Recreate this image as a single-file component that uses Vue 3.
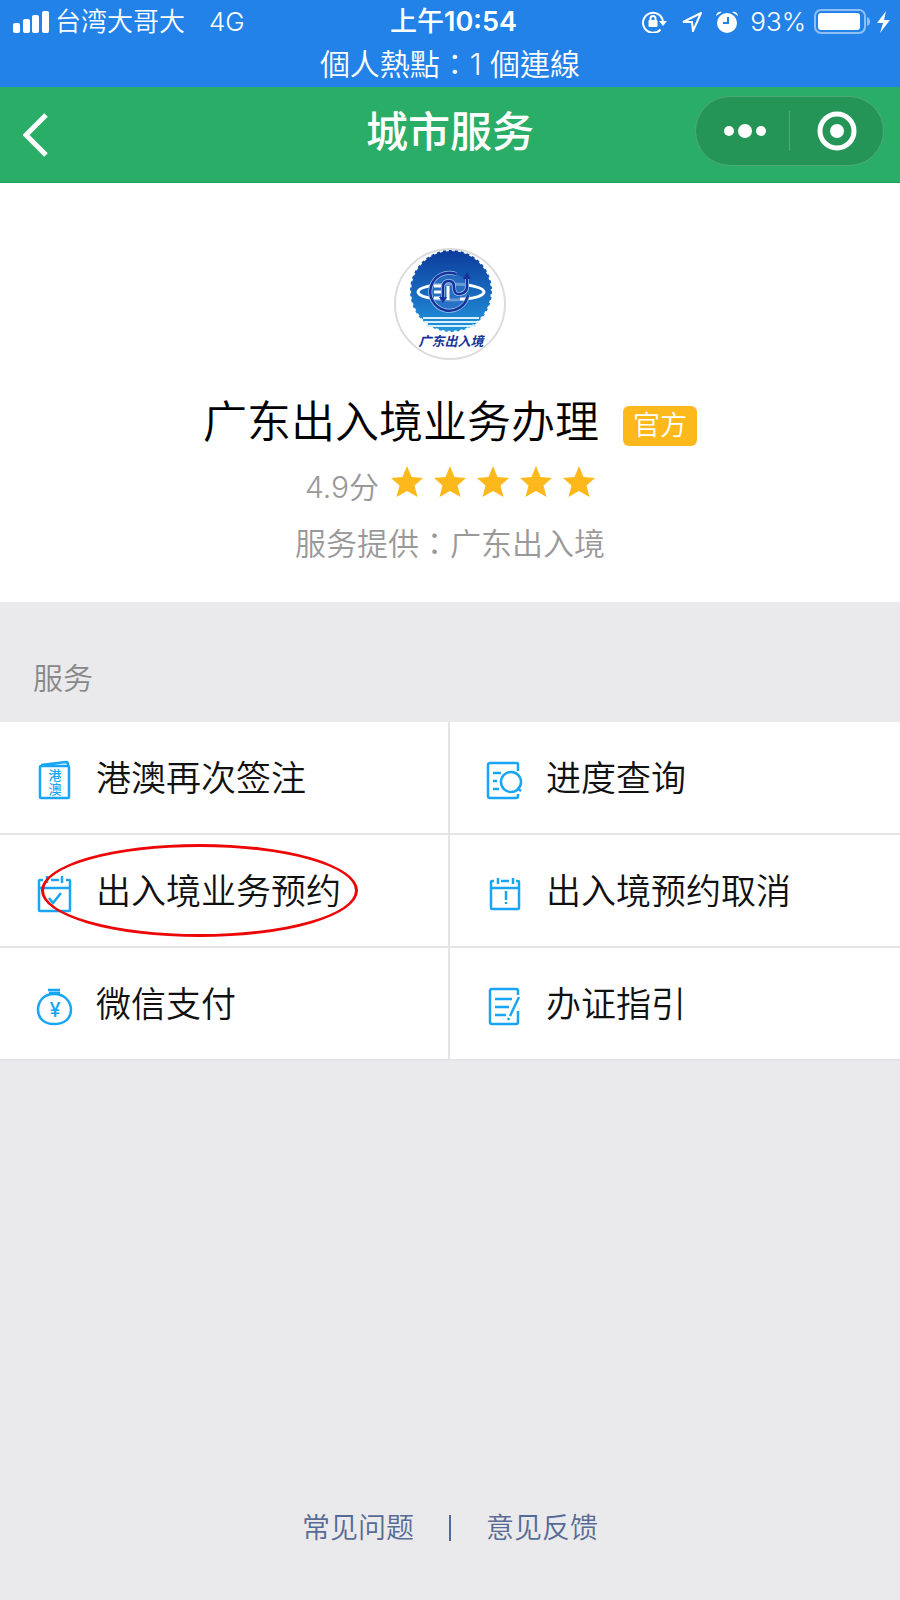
<script setup>
import { ref } from 'vue';

const stars = ref(5);

const services = ref([
  {
    name: '港澳再次签注',
    path: 'M6 12 q0 -1 1 -1 H34 q1 0 1 1 V42 q0 1 -1 1 H7 q-1 0 -1 -1 Z M7 10 L32 7 q2 0 2 3',
    labels: [
      { text: '港', x: 21, y: 25, size: 13 },
      { text: '澳', x: 21, y: 39, size: 13 }
    ]
  },
  {
    name: '进度查询',
    path: 'M34 16 V9 q0 -1 -1 -1 H6 q-2 0 -2 2 V41 q0 2 2 2 H32 q2 0 2 -2 V39 M9 18 H17 M9 26 H13 M9 34 H15 M17 27 a10 10 0 1 0 20 0 a10 10 0 1 0 -20 0 M33 33 L37 36'
  },
  {
    name: '出入境业务预约',
    marked: true,
    path: 'M9 12 H6 q-1 0 -1 1 V42 q0 1 1 1 H35 q1 0 1 -1 V13 q0 -1 -1 -1 H32 M17 12 H25 M5 20 H36 M13 8 V15 M28 8 V15 M15 30 L19 35 L27 25'
  },
  {
    name: '出入境预约取消',
    path: 'M10 13 H8 q-1 0 -1 1 V40 q0 1 1 1 H34 q1 0 1 -1 V14 q0 -1 -1 -1 H32 M17 13 H25 M7 20 H35 M14 10 V16 M29 10 V16 M22 23 V32 M22 34 V36'
  },
  {
    name: '微信支付',
    path: 'M14 9 H26 M15 12 H26 M20 13 C9 13 4 21 4 29 C4 38 11 43 20 43 C30 43 37 38 37 29 C37 21 31 13 20 13 Z',
    labels: [{ text: '¥', x: 21, y: 36, size: 20 }]
  },
  {
    name: '办证指引',
    path: 'M34 14 V10 q0 -2 -2 -2 H8 q-2 0 -2 2 V41 q0 2 2 2 H32 q2 0 2 -2 V30 M11 18 H28 M11 26 H25 M11 34 H22 M35 16 L26 35 M25 37 L24 39'
  }
]);
</script>

<template>
  <div class="page">
    <header class="status">
      <div class="status-row">
        <div class="status-left">
          <svg class="signal" viewBox="0 0 36 22" aria-hidden="true">
            <rect x="0" y="12" width="7" height="10" rx="2" />
            <rect x="10" y="8" width="7" height="14" rx="2" />
            <rect x="19" y="4" width="7" height="18" rx="2" />
            <rect x="29" y="0" width="7" height="22" rx="2" />
          </svg>
          <span>台湾大哥大</span>
          <span class="network">4G</span>
        </div>
        <div class="time">上午<strong>10:54</strong></div>
        <div class="status-right">
          <svg class="lock" viewBox="0 0 25 22" aria-hidden="true">
            <path class="line" d="M18.5 18.5 A10 10 0 1 1 21 11" />
            <path d="M17 10 H25 L21 15 Z" />
            <rect x="6.500" y="9" width="9" height="7" rx="1" />
            <path class="line" d="M8.500 10 V7.500 a2.500 2.500 0 0 1 5 0 V10" />
          </svg>
          <svg class="arrow" viewBox="0 0 20 20" aria-hidden="true">
            <path class="line" d="M1 10 L19 1 L11 19 L10 10 Z" />
          </svg>
          <svg class="alarm" viewBox="0 0 22 22" aria-hidden="true">
            <circle cx="11" cy="12" r="10" />
            <path d="M0 5 Q1 0 6 1 Z M22 5 Q21 0 16 1 Z" />
            <path class="hand" d="M12 6 V12 H7" />
          </svg>
          <span>93%</span>
          <svg class="battery" viewBox="0 0 56 26" aria-hidden="true">
            <rect class="shell" x="1" y="1" width="50" height="23" rx="6" />
            <rect x="4" y="4" width="42" height="17" rx="3" />
            <path class="nub" d="M53 8 q3 1 3 4.500 t-3 4.500 Z" />
          </svg>
          <svg class="bolt" viewBox="0 0 13 22" aria-hidden="true">
            <path d="M9 0 L0 12 H6 L3 22 L13 9 H7 Z" />
          </svg>
        </div>
      </div>
      <div class="hotspot">個人熱點：1 個連線</div>
    </header>

    <nav class="nav">
      <button class="back" type="button" aria-label="返回">
        <svg viewBox="0 0 26 44" aria-hidden="true">
          <path d="M23 2 L3 22 L23 42" />
        </svg>
      </button>
      <h1>城市服务</h1>
      <div class="capsule">
        <button type="button" aria-label="更多">
          <svg viewBox="0 0 42 40" aria-hidden="true">
            <circle cx="7" cy="20" r="5" />
            <circle cx="23" cy="20" r="7" />
            <circle cx="39" cy="20" r="5" />
          </svg>
        </button>
        <button type="button" aria-label="关闭">
          <svg viewBox="0 0 42 40" aria-hidden="true">
            <circle class="ring" cx="21" cy="20" r="17" />
            <circle cx="21" cy="20" r="7" />
          </svg>
        </button>
      </div>
    </nav>

    <section class="profile">
      <svg class="logo" viewBox="0 0 112 112" role="img" aria-label="广东出入境">
        <defs>
          <linearGradient id="sky" x1="0" y1="0" x2="0" y2="1">
            <stop offset="0" stop-color="#0c3c9c" />
            <stop offset="0.5" stop-color="#1867bd" />
            <stop offset="1" stop-color="#2196dc" />
          </linearGradient>
        </defs>
        <circle cx="56" cy="56" r="55" fill="#fff" stroke="#dcdcdc" stroke-width="2" />
        <circle cx="57" cy="43" r="40" fill="url(#sky)" />
        <circle cx="57" cy="43" r="40" fill="none" stroke="url(#sky)" stroke-width="2" stroke-dasharray="3 3" />
        <path d="M29 70 H85 M30 74 H84 M32 78 H82" stroke="#d8f0fc" stroke-width="2" />
        <ellipse cx="57" cy="44" rx="33" ry="8" fill="none" stroke="#fff" stroke-width="3" />
        <circle cx="56" cy="44" r="19" fill="#2c70c4" opacity="0.700" />
        <path d="M40 38 H48 M40 44 H47 M40 50 H46 M54 38 V52 M66 51 H72" fill="none" stroke="#fff" stroke-width="3" />
        <g fill="none" stroke="#9cc4ef" stroke-width="4">
          <path d="M62 26 A19 19 0 1 0 74 47" />
          <path d="M49 52 V39 Q49 33 55 33 Q60 33 60 39 Q60 47 66 46 Q72 45 73 40 V29" />
        </g>
        <g fill="none" stroke="#17339a" stroke-width="2.500">
          <path d="M62 26 A19 19 0 1 0 74 47" />
          <path d="M49 52 V39 Q49 33 55 33 Q60 33 60 39 Q60 47 66 46 Q72 45 73 40 V29" />
        </g>
        <path d="M45 49 H53 L49 55 Z M69 31 L73 24 L77 31 Z" fill="#17339a" />
        <text class="logo-text" x="57" y="98" text-anchor="middle">广东出入境</text>
      </svg>
      <div class="title">
        <h2>广东出入境业务办理</h2>
        <span class="badge">官方</span>
      </div>
      <div class="score">
        <span>4.9分</span>
        <div class="stars">
          <svg v-for="n in stars" :key="n" viewBox="0 0 32 32" aria-hidden="true">
            <path d="M16 0 L20.500 11 L32 12 L23.500 19.500 L26.500 31 L16 25 L5.500 31 L8.500 19.500 L0 12 L11.500 11 Z" />
          </svg>
        </div>
      </div>
      <p class="provider">服务提供<span class="colon">：</span>广东出入境</p>
    </section>

    <h3 class="section-title">服务</h3>
    <div class="services">
      <a v-for="item in services" :key="item.name" class="service" href="#">
        <svg class="service-icon" viewBox="0 0 40 46" aria-hidden="true">
          <path :d="item.path" />
          <text v-for="label in item.labels" :key="label.text" :x="label.x" :y="label.y" :font-size="label.size" text-anchor="middle">{{ label.text }}</text>
        </svg>
        <span class="service-name">{{ item.name }}</span>
        <i v-if="item.marked" class="mark"></i>
      </a>
    </div>

    <footer class="footer">
      <a href="#">常见问题</a>
      <span class="divider"></span>
      <a href="#">意见反馈</a>
    </footer>
  </div>
</template>

<style>
body {
  margin: 0;
  background: #eaeaec;
}
</style>

<style scoped>
.page {
  display: flex;
  flex-direction: column;
  min-height: 100vh;
  font-family: Inter, "Noto Sans CJK SC", sans-serif;
  font-weight: 350;
  background: #eaeaec;
}

h1,
h2,
h3,
p {
  margin: 0;
}

svg {
  display: block;
  flex: none;
}

button {
  padding: 0;
  border: 0;
  background: none;
}

a {
  text-decoration: none;
}

.status {
  height: 87px;
  color: #fff;
  background: #2382e8;
  font-family: Inter, "Noto Sans CJK TC", sans-serif;
}

.status-row {
  display: grid;
  grid-template-columns: 1fr auto 1fr;
  align-items: center;
  height: 44px;
  padding: 0 10px 0 13px;
  font-size: 26px;
}

.status svg {
  fill: #fff;
}

.status .line {
  fill: none;
  stroke: #fff;
  stroke-width: 2;
}

.status-left,
.status-right {
  display: flex;
  align-items: center;
  line-height: 40px;
}

.status-right {
  justify-content: flex-end;
}

.signal {
  width: 36px;
  height: 22px;
  margin-right: 6px;
}

.network {
  margin-left: 24px;
}

.time {
  padding-left: 4px;
  font-size: 27px;
  font-weight: 500;
  line-height: 40px;
}

.time strong {
  font-weight: 600;
}

.lock {
  width: 25px;
  height: 22px;
  margin-right: 15px;
}

.arrow {
  width: 20px;
  height: 20px;
  margin-right: 14px;
}

.alarm {
  width: 22px;
  height: 22px;
  margin-right: 12px;
}

.alarm .hand {
  fill: none;
  stroke: #2382e8;
  stroke-width: 2;
}

.battery {
  width: 56px;
  height: 26px;
  margin: 0 7px 0 8px;
}

.battery .shell {
  fill: none;
  stroke: #8fbff3;
  stroke-width: 2;
}

.battery .nub {
  fill: #8fbff3;
}

.bolt {
  width: 13px;
  height: 22px;
}

.hotspot {
  font-size: 30px;
  line-height: 40px;
  text-align: center;
}

.nav {
  display: grid;
  grid-template-columns: 1fr auto 1fr;
  align-items: center;
  box-sizing: border-box;
  height: 96px;
  padding: 0 16px;
  border-bottom: 1px solid #17a35c;
  color: #fff;
  background: #2aad67;
}

.nav h1 {
  margin-bottom: 6px;
  font-size: 42px;
  font-weight: 500;
  line-height: 60px;
}

.back {
  justify-self: start;
  margin-left: 7px;
}

.back svg {
  width: 26px;
  height: 44px;
  fill: none;
  stroke: #fff;
  stroke-width: 5;
}

.capsule {
  display: flex;
  justify-self: end;
  align-items: center;
  box-sizing: border-box;
  width: 189px;
  height: 70px;
  margin-bottom: 8px;
  border: 1px solid #4fa878;
  border-radius: 35px;
  background: #249557;
}

.capsule button {
  display: flex;
  flex: 1;
  justify-content: center;
}

.capsule button + button {
  border-left: 1px solid #4fa878;
}

.capsule svg {
  width: 42px;
  height: 40px;
  overflow: visible;
  fill: #fff;
}

.capsule .ring {
  fill: none;
  stroke: #fff;
  stroke-width: 5;
}

.profile {
  display: flex;
  flex-direction: column;
  align-items: center;
  padding: 65px 0 36px;
  background: #fff;
}

.logo {
  width: 112px;
  height: 112px;
}

.logo-text {
  fill: #17339a;
  font-size: 13px;
  font-style: italic;
  font-weight: 700;
}

.title {
  display: flex;
  align-items: center;
  gap: 24px;
  margin-top: 32px;
}

.title h2 {
  color: #000;
  font-size: 44px;
  font-weight: 350;
  line-height: 60px;
}

.badge {
  margin-top: 8px;
  padding: 0 10px;
  border-radius: 6px;
  color: #fff;
  background: #fdb81b;
  font-size: 27px;
  line-height: 40px;
}

.score {
  display: flex;
  align-items: flex-start;
  gap: 12px;
  margin-top: 14px;
  color: #999;
  font-size: 30px;
  line-height: 42px;
}

.stars {
  display: flex;
  gap: 11px;
}

.stars svg {
  width: 32px;
  height: 32px;
  fill: #fdb81b;
}

.provider {
  margin-top: 12px;
  color: #999;
  font-size: 31px;
  line-height: 44px;
}

/* the traditional face centres the full-width colon */
.colon {
  font-family: "Noto Sans CJK TC", sans-serif;
}

.section-title {
  padding: 54px 33px 22px;
  color: #888;
  font-size: 30px;
  font-weight: 350;
  line-height: 44px;
}

.services {
  display: grid;
  grid-template-columns: 1fr 1fr;
}

.service {
  position: relative;
  display: flex;
  align-items: center;
  gap: 22px;
  box-sizing: border-box;
  height: 113px;
  padding-left: 34px;
  border-bottom: 2px solid #e4e4e6;
  color: #111;
  background: #fff;
  font-size: 35px;
}

.service:nth-child(odd) {
  border-right: 2px solid #e4e4e6;
}

.service-name {
  padding-bottom: 4px;
}

.service-icon {
  width: 40px;
  height: 46px;
}

.service-icon path {
  fill: none;
  stroke: #18a5f5;
  stroke-width: 2.5;
}

.service-icon text {
  fill: #18a5f5;
  font-weight: 500;
}

/* hand-drawn style ring around the booking entry */
.mark {
  position: absolute;
  top: 9px;
  left: 41px;
  box-sizing: border-box;
  width: 317px;
  height: 93px;
  border: 3px solid #ec0606;
  border-radius: 50%;
}

.footer {
  display: flex;
  justify-content: center;
  align-items: center;
  gap: 35px;
  margin-top: auto;
  padding-bottom: 50px;
  font-size: 28px;
  line-height: 44px;
}

.footer a {
  color: #576b95;
}

.footer .divider {
  width: 2px;
  height: 26px;
  background: #4a69a5;
}
</style>
